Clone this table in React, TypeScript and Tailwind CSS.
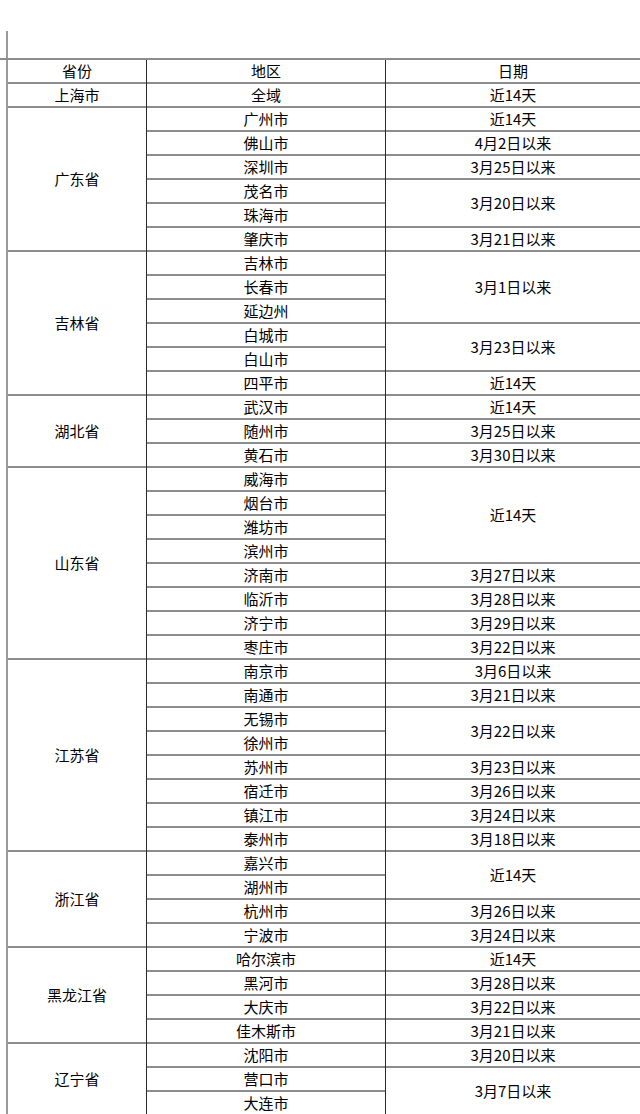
type DateSpan = [string, number];

interface Block {
  province: string;
  cities: string[];
  dates: DateSpan[];
}

const blocks: Block[] = [
  { province: '上海市', cities: ['全域'], dates: [['近14天', 1]] },
  {
    province: '广东省',
    cities: ['广州市', '佛山市', '深圳市', '茂名市', '珠海市', '肇庆市'],
    dates: [['近14天', 1], ['4月2日以来', 1], ['3月25日以来', 1], ['3月20日以来', 2], ['3月21日以来', 1]]
  },
  {
    province: '吉林省',
    cities: ['吉林市', '长春市', '延边州', '白城市', '白山市', '四平市'],
    dates: [['3月1日以来', 3], ['3月23日以来', 2], ['近14天', 1]]
  },
  {
    province: '湖北省',
    cities: ['武汉市', '随州市', '黄石市'],
    dates: [['近14天', 1], ['3月25日以来', 1], ['3月30日以来', 1]]
  },
  {
    province: '山东省',
    cities: ['威海市', '烟台市', '潍坊市', '滨州市', '济南市', '临沂市', '济宁市', '枣庄市'],
    dates: [['近14天', 4], ['3月27日以来', 1], ['3月28日以来', 1], ['3月29日以来', 1], ['3月22日以来', 1]]
  },
  {
    province: '江苏省',
    cities: ['南京市', '南通市', '无锡市', '徐州市', '苏州市', '宿迁市', '镇江市', '泰州市'],
    dates: [
      ['3月6日以来', 1],
      ['3月21日以来', 1],
      ['3月22日以来', 2],
      ['3月23日以来', 1],
      ['3月26日以来', 1],
      ['3月24日以来', 1],
      ['3月18日以来', 1]
    ]
  },
  {
    province: '浙江省',
    cities: ['嘉兴市', '湖州市', '杭州市', '宁波市'],
    dates: [['近14天', 2], ['3月26日以来', 1], ['3月24日以来', 1]]
  },
  {
    province: '黑龙江省',
    cities: ['哈尔滨市', '黑河市', '大庆市', '佳木斯市'],
    dates: [['近14天', 1], ['3月28日以来', 1], ['3月22日以来', 1], ['3月21日以来', 1]]
  },
  {
    province: '辽宁省',
    cities: ['沈阳市', '营口市', '大连市'],
    dates: [['3月20日以来', 1], ['3月7日以来', 2]]
  }
];

const ROW = 24;

function Cell({ text, rows = 1 }: { text: string; rows?: number }) {
  return (
    <div
      className="flex items-center justify-center border-b-2 border-[#8c8c8c] pb-[1px]"
      style={{ height: rows * ROW }}
    >
      {text}
    </div>
  );
}

export default function App() {
  return (
    <div
      className="h-[1114px] w-[640px] overflow-hidden bg-white text-[15px] leading-none text-black"
      style={{ fontFamily: '"Noto Sans CJK SC", "Noto Sans", sans-serif' }}
    >
      <div className="ml-[6px] mt-[31px] h-[27px] border-l-2 border-[#9a9a9a]" />
      <div className="border-t-2 border-[#8c8c8c]">
        <div className="ml-[6px] border-l-2 border-[#9a9a9a]">
          <div className="flex">
            <div className="w-[139px] border-r border-[#2a2a2a]">
              <Cell text="省份" />
            </div>
            <div className="w-[239px] border-r border-[#2a2a2a]">
              <Cell text="地区" />
            </div>
            <div className="flex-1">
              <Cell text="日期" />
            </div>
          </div>
          {blocks.map((b) => (
            <div key={b.province} className="flex">
              <div className="w-[139px] border-r border-[#2a2a2a]">
                <Cell text={b.province} rows={b.cities.length} />
              </div>
              <div className="flex w-[239px] flex-col border-r border-[#2a2a2a]">
                {b.cities.map((c) => (
                  <Cell key={c} text={c} />
                ))}
              </div>
              <div className="flex flex-1 flex-col">
                {b.dates.map(([d, n], i) => (
                  <Cell key={i} text={d} rows={n} />
                ))}
              </div>
            </div>
          ))}
        </div>
      </div>
    </div>
  );
}
